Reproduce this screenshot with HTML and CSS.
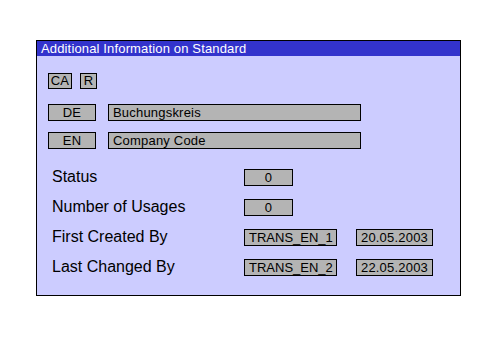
FILE: index.html
```html
<!DOCTYPE html>
<html lang="en">
<head>
    <meta charset="UTF-8">
    <title>Additional Information on Standard</title>
    <link rel="stylesheet" href="styles.css">
</head>
<body>
    <div class="panel">
        <div class="title">Additional Information on Standard</div>
        <div class="content">
            <div class="row codes">
                <span class="box ca">CA</span>
                <span class="box r">R</span>
            </div>
            <div class="row lang">
                <span class="box code">DE</span>
                <span class="box text">Buchungskreis</span>
            </div>
            <div class="row lang en">
                <span class="box code">EN</span>
                <span class="box text">Company Code</span>
            </div>
            <div class="stats">
                <div class="label">Status</div>
                <div><span class="box num">0</span></div>
                <div></div>
                <div class="label">Number of Usages</div>
                <div><span class="box num">0</span></div>
                <div></div>
                <div class="label">First Created By</div>
                <div><span class="box user">TRANS_EN_1</span></div>
                <div><span class="box date">20.05.2003</span></div>
                <div class="label">Last Changed By</div>
                <div><span class="box user">TRANS_EN_2</span></div>
                <div><span class="box date">22.05.2003</span></div>
            </div>
        </div>
    </div>
</body>
</html>
```

FILE: styles.css
```css
:root{
    --panel-bg: #ccccff;
    --title-bg: #3333cc;
    --field-bg: #b4b4b4;
}
*{
    margin: 0;
    padding: 0;
    box-sizing: border-box;
}
body{
    background: #ffffff;
    font-family: "Liberation Sans", Arial, sans-serif;
    color: #000000;
}
.panel
{
    margin: 40px 0 0 36px;
    width: 425px;
    height: 256px;
    border: 1px solid #000000;
    background: var(--panel-bg);
}
.title
{
    height: 15px;
    background: var(--title-bg);
    color: #ffffff;
    font-size: 13px;
    letter-spacing: 0.15px;
    line-height: 15px;
    padding-left: 4px;
}
.content
{
    padding: 17px 0 0 11px;
}
.row
{
    display: flex;
    gap: 8px;
}
.lang{
    margin-top: 15px;
    gap: 12px;
}
.lang.en{
    margin-top: 11px;
}
.box
{
    display: inline-block;
    height: 17px;
    line-height: 15px;
    border: 1px solid #000000;
    background: var(--field-bg);
    font-size: 13px;
    letter-spacing: 0.2px;
    text-align: center;
    white-space: nowrap;
}
.ca{ width: 24px; height: 16px; line-height: 14px; }
.r{ width: 17px; height: 16px; line-height: 14px; }
.code{ width: 48px; }
.text{
    width: 253px;
    text-align: left;
    padding-left: 4px;
}
.stats
{
    display: grid;
    grid-template-columns: 192px 112px auto;
    grid-auto-rows: 30px;
    align-items: center;
    margin-top: 13px;
    padding-left: 4px;
}
.label{
    font-size: 16px;
}
.stats > div{
    display: flex;
    align-items: center;
}
.num{ width: 49px; }
.user{
    width: 93px;
    text-align: left;
    padding-left: 4px;
    letter-spacing: 0;
}
.date{ width: 77px; }
```
